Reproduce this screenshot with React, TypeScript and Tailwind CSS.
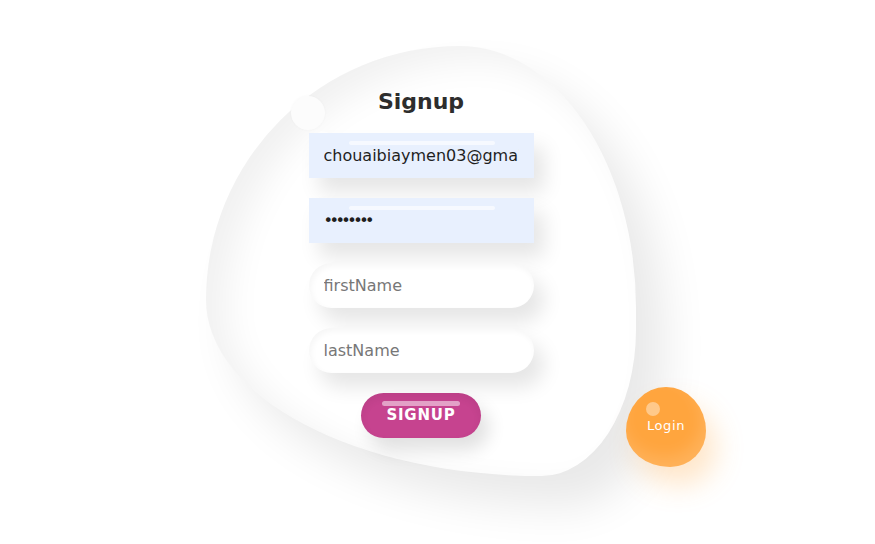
import React from "react";

function Field({
  type,
  value,
  placeholder,
  filled,
}: {
  type: string;
  value?: string;
  placeholder: string;
  filled?: boolean;
}) {
  return (
    <div
      className={
        filled
          ? "relative w-[225px] h-[45px] bg-[#e8f0fe] shadow-[10px_14px_20px_rgba(0,0,0,0.10)]"
          : "relative w-[225px] h-[45px] bg-white rounded-full shadow-[10px_14px_20px_rgba(0,0,0,0.10),inset_2px_3px_6px_rgba(0,0,0,0.04)]"
      }
    >
      <div className="absolute left-[40px] top-[8px] w-[146px] h-[4px] rounded-full bg-white/60" />
      <input
        type={type}
        defaultValue={value}
        placeholder={placeholder}
        readOnly
        className={
          "relative w-full h-full bg-transparent pl-[15px] pr-[15px] text-[16px] text-[#1f1f1f] placeholder:text-[#777] outline-none" +
          (type === "password" ? " tracking-[-3.5px]" : "")
        }
      />
    </div>
  );
}

export default function App() {
  return (
    <main className="w-[875px] h-[544px] bg-white overflow-hidden font-['DejaVu_Sans',sans-serif]">
      <div className="flex items-end pl-[206px] pt-[46px]">
        {/* signup blob */}
        <div className="relative w-[430px] h-[430px] bg-white rounded-[59%_41%_22%_78%/59%_61%_34%_41%] shadow-[28px_30px_45px_rgba(0,0,0,0.09),inset_20px_14px_36px_rgba(0,0,0,0.06)] flex flex-col items-center pt-[42px]">
          <div className="absolute left-[85px] top-[50px] w-[34px] h-[34px] rounded-full bg-[#fcfcfc] shadow-[0_0_3px_rgba(0,0,0,0.03)]" />
          <div className="absolute left-[110px] top-[85px] w-[14px] h-[14px] rounded-full bg-white/90" />

          <h1 className="text-[22px] leading-[28px] font-bold text-[#2d2d2d]">Signup</h1>

          <div className="mt-[17px] flex flex-col gap-[20px]">
            <Field type="text" value="chouaibiaymen03@gmail.com" placeholder="email" filled />
            <Field type="password" value="12345678" placeholder="password" filled />
            <Field type="text" placeholder="firstName" />
            <Field type="text" placeholder="lastName" />
          </div>

          <button className="relative mt-[20px] w-[120px] h-[45px] rounded-full bg-[#c6438f] shadow-[8px_12px_18px_rgba(0,0,0,0.12),inset_0px_4px_8px_rgba(0,0,0,0.06)] text-white text-[15px] font-bold tracking-[0.8px]">
            <span className="absolute left-[21px] top-[8px] w-[78px] h-[5px] rounded-full bg-white/50" />
            <span className="relative">SIGNUP</span>
          </button>
        </div>

        {/* login blob */}
        <button className="relative ml-[-10px] mb-[9px] w-[80px] h-[80px] bg-[#ffa53e] rounded-[50%_50%_45%_55%/55%_55%_45%_45%] shadow-[10px_18px_28px_rgba(255,165,62,0.28),inset_-4px_-10px_16px_rgba(255,255,255,0.15)] text-white text-[13px] tracking-[0.6px]">
          <span className="absolute left-[20px] top-[15px] w-[14px] h-[14px] rounded-full bg-white/40" />
          <span className="relative top-[-1px]">Login</span>
        </button>
      </div>
    </main>
  );
}
